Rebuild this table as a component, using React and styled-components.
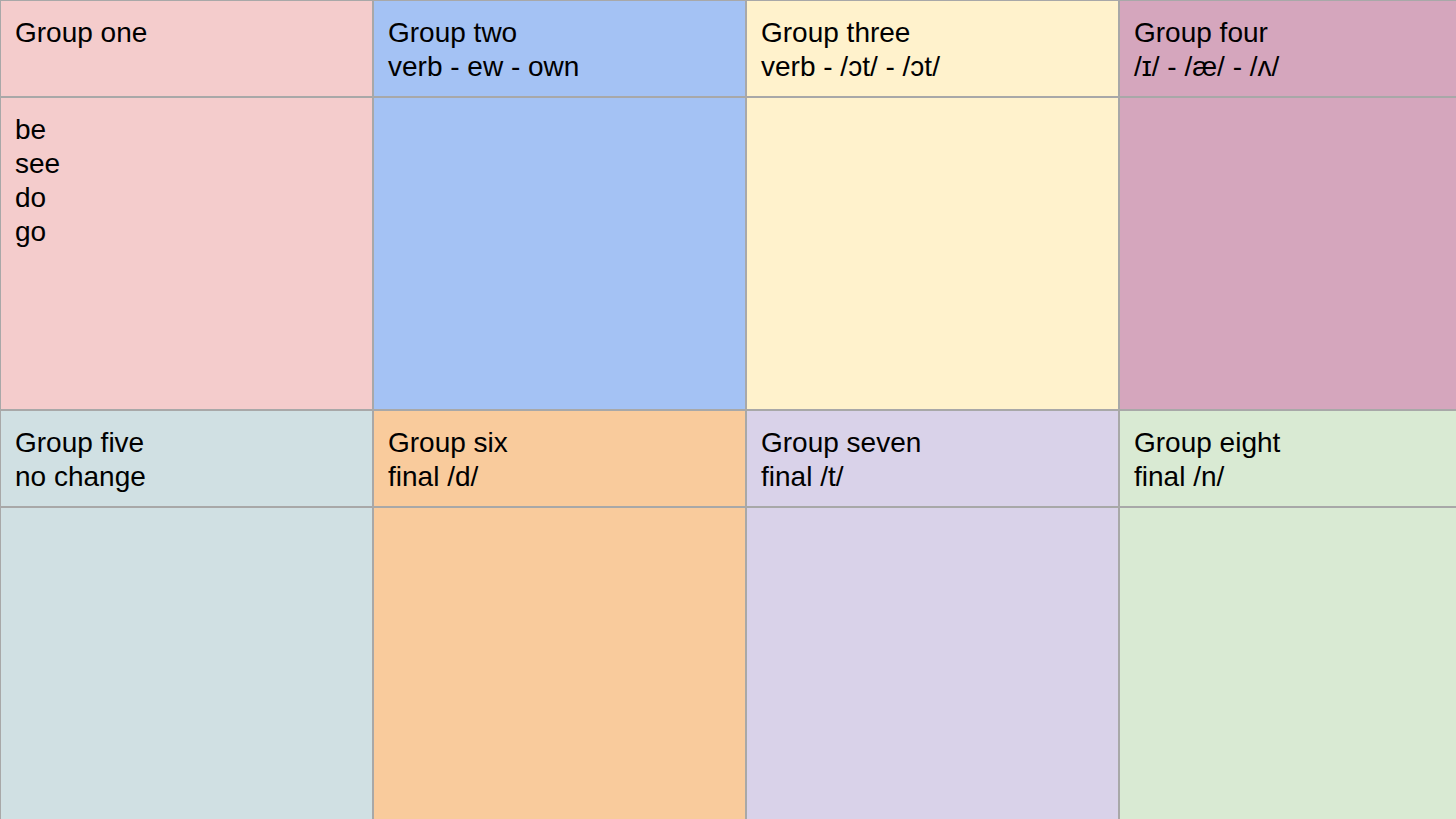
import React from "react";
import styled, { createGlobalStyle } from "styled-components";

const Global = createGlobalStyle`
  html, body { margin: 0; padding: 0; background: #ffffff; overflow: hidden; }
  body { width: 1456px; height: 819px; }
`;

const Board = styled.div`
  display: grid;
  grid-template-columns: repeat(4, 371px);
  grid-template-rows: 95px 311px 95px 311px;
  gap: 2px;
  padding: 1px 0 0 1px;
  background: #a8a8a8;
  width: max-content;
  font-family: "Liberation Sans", Arial, sans-serif;
  font-size: 28px;
  line-height: 34px;
  color: #000;
`;

const Cell = styled.div`
  background: ${(p) => p.$bg};
  padding: 15px 14px;
  white-space: nowrap;
  overflow: hidden;
`;

const Line = styled.div``;

const groups = [
  { bg: "#f4cccc", title: "Group one", sub: null, words: ["be", "see", "do", "go"] },
  { bg: "#a4c2f4", title: "Group two", sub: "verb - ew - own", words: [] },
  { bg: "#fff2cc", title: "Group three", sub: "verb - /ɔt/ - /ɔt/", words: [] },
  { bg: "#d5a6bd", title: "Group four", sub: "/ɪ/ - /æ/ - /ʌ/", words: [] },
  { bg: "#d0e0e3", title: "Group five", sub: "no change", words: [] },
  { bg: "#f9cb9c", title: "Group six", sub: "final /d/", words: [] },
  { bg: "#d9d2e9", title: "Group seven", sub: "final /t/", words: [] },
  { bg: "#d9ead3", title: "Group eight", sub: "final /n/", words: [] },
];

export default function App() {
  const rows = [groups.slice(0, 4), groups.slice(4, 8)];
  return (
    <>
      <Global />
      <Board>
        {rows.map((row, ri) => (
          <React.Fragment key={ri}>
            {row.map((g) => (
              <Cell key={g.title + "h"} $bg={g.bg}>
                <Line>{g.title}</Line>
                {g.sub && <Line>{g.sub}</Line>}
              </Cell>
            ))}
            {row.map((g) => (
              <Cell key={g.title + "b"} $bg={g.bg}>
                {g.words.map((w) => (
                  <Line key={w}>{w}</Line>
                ))}
              </Cell>
            ))}
          </React.Fragment>
        ))}
      </Board>
    </>
  );
}
